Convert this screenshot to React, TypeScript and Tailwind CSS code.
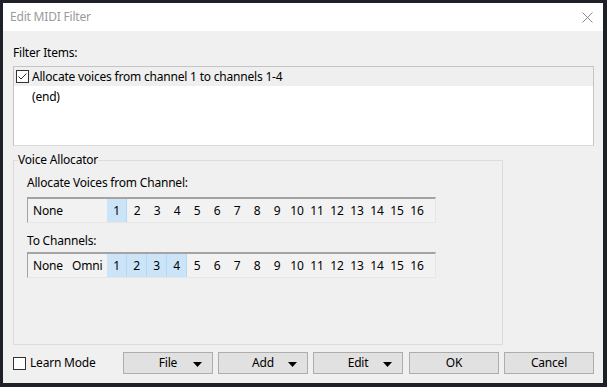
import React from "react";

const channels = Array.from({ length: 16 }, (_, i) => i + 1);

function Check({ checked }: { checked?: boolean }) {
  return (
    <svg width="13" height="13" viewBox="0 0 13 13" className="shrink-0">
      <rect x="0.5" y="0.5" width="12" height="12" fill="#fff" stroke="#333" />
      {checked && <polyline points="2.5,6.5 5,9 10.5,3.5" fill="none" stroke="#333" strokeWidth="1" />}
    </svg>
  );
}

function Arrow() {
  return (
    <svg width="9" height="5" viewBox="0 0 9 5" className="absolute right-[10px] top-[9px]">
      <polygon points="0,0 9,0 4.5,5" fill="#000" />
    </svg>
  );
}

function ChannelStrip({ selected, omni }: { selected: number[]; omni?: boolean }) {
  return (
    <div className="flex h-[26px] w-[409px] border-t-2 border-l border-t-[#a3a3a3] border-l-[#a3a3a3] border-r border-b border-r-[#e6e6e6] border-b-[#e6e6e6] bg-[#f2f2f2]">
      {omni ? (
        <>
          <div className="w-[40px] pl-[5px] leading-[24px]">None</div>
          <div className="w-[39px] pl-[4px] leading-[24px]">Omni</div>
        </>
      ) : (
        <div className="w-[79px] pl-[5px] leading-[24px]">None</div>
      )}
      {channels.map((c) => (
        <div
          key={c}
          className={`w-[20px] text-center leading-[24px] ${
            selected.includes(c) ? "bg-[#cce4f7] border-r border-[#b6d6f1]" : ""
          }`}
        >
          {c}
        </div>
      ))}
    </div>
  );
}

export default function App() {
  const btn = "relative h-[22px] w-[90px] border border-[#adadad] bg-[#e1e1e1] text-center leading-[20px]";
  return (
    <div
      className="w-[607px] h-[387px] bg-[#1d2027] p-[3px] pr-[4px] text-[12px] tracking-[-0.2px] text-black"
      style={{ fontFamily: '"Noto Sans", "Segoe UI", sans-serif' }}
    >
      <div className="flex h-[380px] w-[600px] flex-col bg-[#f0f0f0]">
        {/* Title bar */}
        <div className="flex h-[28px] items-center justify-between bg-white pl-[7px] pr-[10px]">
          <span className="text-[#9a9a9a]">Edit MIDI Filter</span>
          <svg width="11" height="11" viewBox="0 0 11 11">
            <path d="M0.5 0.5L10.5 10.5M10.5 0.5L0.5 10.5" stroke="#8a8a8a" strokeWidth="1" />
          </svg>
        </div>

        <div className="flex flex-col pl-[10px] pr-[8px]">
          <div className="mt-[14px] mb-[5px] leading-[16px]">Filter Items:</div>

          {/* Filter list */}
          <div className="h-[80px] w-[581px] border border-[#c4c4c4] border-b-[#dcdcdc] bg-white">
            <div className="flex h-[19px] items-center gap-[3px] bg-[#efefef] pl-[2px]">
              <Check checked />
              <span>Allocate voices from channel 1 to channels 1-4</span>
            </div>
            <div className="h-[20px] pl-[18px] leading-[21px]">(end)</div>
          </div>

          {/* Voice Allocator group */}
          <fieldset className="mt-[6px] h-[193px] w-[490px] border border-[#dcdcdc] px-[13px]">
            <legend className="ml-[-9px] px-0 leading-[16px]">Voice Allocator</legend>
            <div className="mt-[7px] leading-[16px]">Allocate Voices from Channel:</div>
            <div className="mt-[6px]">
              <ChannelStrip selected={[1]} />
            </div>
            <div className="mt-[10px] leading-[16px]">To Channels:</div>
            <div className="mt-[3px]">
              <ChannelStrip selected={[1, 2, 3, 4]} omni />
            </div>
          </fieldset>

          {/* Bottom row */}
          <div className="mt-[7px] flex items-center">
            <label className="flex w-[110px] items-center gap-[4px]">
              <Check />
              <span>Learn Mode</span>
            </label>
            <div className="flex gap-[5px]">
              <button className={btn}>
                File
                <Arrow />
              </button>
              <button className={btn}>
                Add
                <Arrow />
              </button>
              <button className={btn}>
                Edit
                <Arrow />
              </button>
              <button className={`${btn} ml-[1px]`}>OK</button>
              <button className={btn}>Cancel</button>
            </div>
          </div>
        </div>
      </div>
    </div>
  );
}
